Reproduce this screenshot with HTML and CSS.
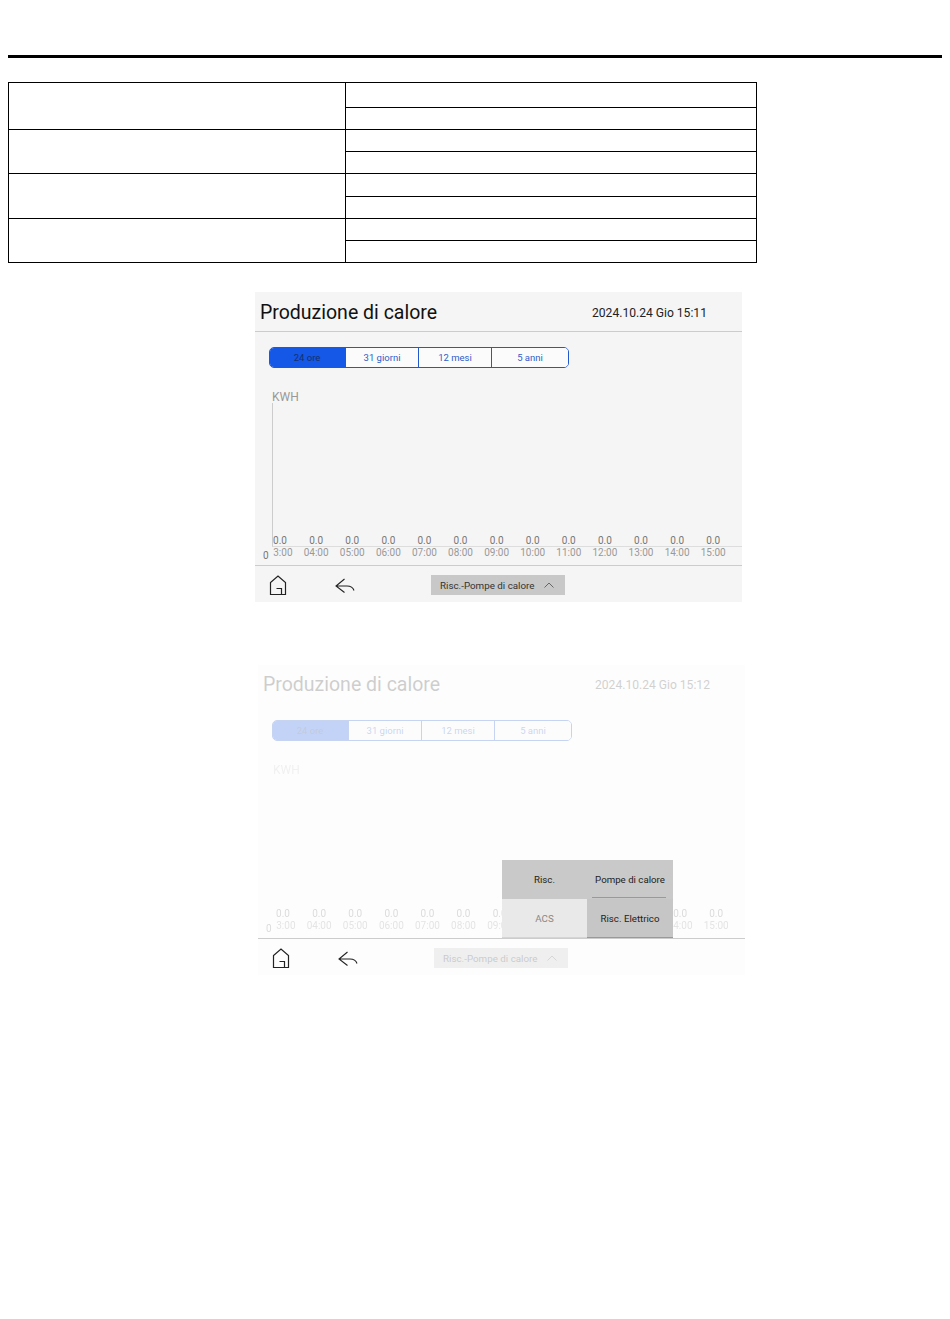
FILE: index.html
```html
<!DOCTYPE html>
<html lang="it">
<head>
<meta charset="utf-8">
<title>Produzione di calore</title>
<link rel="stylesheet" href="styles.css">
</head>
<body>
<hr class="rule">
<table class="spec">
  <tr class="r25"><td class="c1" rowspan="2"></td><td></td></tr>
  <tr class="r22"><td></td></tr>
  <tr class="r22"><td class="c1" rowspan="2"></td><td></td></tr>
  <tr class="r22"><td></td></tr>
  <tr class="r23"><td class="c1" rowspan="2"></td><td></td></tr>
  <tr class="r22"><td></td></tr>
  <tr class="r22"><td class="c1" rowspan="2"></td><td></td></tr>
  <tr class="r22"><td></td></tr>
</table>

<section class="screen screen--first">
  <header class="head">
    <h1 class="title">Produzione di calore</h1>
    <span class="date">2024.10.24 Gio 15:11</span>
  </header>
  <div class="body">
    <div class="tabs">
      <span class="tab tab--on t1">24 ore</span><span class="tab t2">31 giorni</span><span class="tab t2">12 mesi</span><span class="tab t3">5 anni</span>
    </div>
    <div class="unit">KWH</div>
    <div class="plot">
      <div class="ticks vals"><span>0.0</span><span>0.0</span><span>0.0</span><span>0.0</span><span>0.0</span><span>0.0</span><span>0.0</span><span>0.0</span><span>0.0</span><span>0.0</span><span>0.0</span><span>0.0</span><span>0.0</span></div>
    </div>
    <div class="axis">
      <span class="zero">0</span>
      <div class="ticks times"><span>03:00</span><span>04:00</span><span>05:00</span><span>06:00</span><span>07:00</span><span>08:00</span><span>09:00</span><span>10:00</span><span>11:00</span><span>12:00</span><span>13:00</span><span>14:00</span><span>15:00</span></div>
    </div>
  </div>
  <footer class="foot">
    <svg class="home" viewBox="0 0 18 21" width="18" height="21"><path d="M1.500 19.500V7.500L9 1l7.500 6.500v12z M7.500 13.500h5v6" fill="none" stroke="#222" stroke-width="1.2"/></svg>
    <svg class="back" viewBox="0 0 20 16" width="20" height="16"><path d="M9.500 1L1 8l8.500 6.500M1 8h11c4 0 6 1.500 7 4.500" fill="none" stroke="#222" stroke-width="1.1"/></svg>
    <div class="drop"><span>Risc.-Pompe di calore</span><svg class="chev" viewBox="0 0 10 6" width="10" height="6"><path d="M.5 5.500L5 1l4.500 4.500" fill="none" stroke="#666" stroke-width="1"/></svg></div>
  </footer>
</section>

<section class="screen screen--dim">
  <header class="head dim">
    <h1 class="title">Produzione di calore</h1>
    <span class="date">2024.10.24 Gio 15:12</span>
  </header>
  <div class="body">
    <div class="dim">
      <div class="tabs">
        <span class="tab tab--on t1">24 ore</span><span class="tab t2">31 giorni</span><span class="tab t2">12 mesi</span><span class="tab t3">5 anni</span>
      </div>
      <div class="unit">KWH</div>
      <div class="plot">
        <div class="ticks vals"><span>0.0</span><span>0.0</span><span>0.0</span><span>0.0</span><span>0.0</span><span>0.0</span><span>0.0</span><span>0.0</span><span>0.0</span><span>0.0</span><span>0.0</span><span>0.0</span><span>0.0</span></div>
      </div>
      <div class="axis">
        <span class="zero">0</span>
        <div class="ticks times"><span>03:00</span><span>04:00</span><span>05:00</span><span>06:00</span><span>07:00</span><span>08:00</span><span>09:00</span><span>10:00</span><span>11:00</span><span>12:00</span><span>13:00</span><span>14:00</span><span>15:00</span></div>
      </div>
    </div>
  </div>
  <footer class="foot">
    <svg class="home" viewBox="0 0 18 21" width="18" height="21"><path d="M1.500 19.500V7.500L9 1l7.500 6.500v12z M7.500 13.500h5v6" fill="none" stroke="#222" stroke-width="1.2"/></svg>
    <svg class="back" viewBox="0 0 20 16" width="20" height="16"><path d="M9.500 1L1 8l8.500 6.500M1 8h11c4 0 6 1.500 7 4.500" fill="none" stroke="#222" stroke-width="1.1"/></svg>
    <div class="drop dim"><span>Risc.-Pompe di calore</span><svg class="chev" viewBox="0 0 10 6" width="10" height="6"><path d="M.5 5.500L5 1l4.500 4.500" fill="none" stroke="#666" stroke-width="1"/></svg></div>
  </footer>
  <div class="menu">
    <span class="item">Risc.</span>
    <span class="item item--line">Pompe di calore</span>
    <span class="item item--off">ACS</span>
    <span class="item item--sel">Risc. Elettrico</span>
  </div>
</section>
</body>
</html>
```
FILE: styles.css
```css
html, body { margin: 0; padding: 0; background: #fff; }
body { padding: 55px 8px 0; font-family: Roboto, "Liberation Sans", sans-serif; color: #222; min-height: 1264px; box-sizing: content-box; }

.rule { height: 3px; margin: 0; border: 0; background: #000; }

.spec { width: 749px; margin-top: 24px; border-collapse: collapse; table-layout: fixed; }
.spec td { border: 1px solid #000; padding: 0; }
.spec .c1 { width: 336px; }
.r25 { height: 25px; }
.r22 { height: 22px; }
.r23 { height: 23px; }

.screen { position: relative; width: 487px; height: 310px; background: #f5f5f5; display: flex; flex-direction: column; }
.screen--first { margin: 29px 0 0 247px; }
.screen--dim { margin: 63px 0 0 250px; background: #fdfdfd; }
.dim { opacity: .25; }

.head { height: 40px; box-sizing: border-box; flex: none; display: flex; align-items: center; border-bottom: 1px solid #ccc; padding: 2px 0 0 5px; }
.screen--dim .head { padding-top: 0; opacity: .2; border-bottom-color: transparent; }
.title { margin: 0; font-size: 19.5px; font-weight: 400; color: #111; width: 332px; }
.date { font-size: 12.1px; color: #222; }

.body { flex: 1; padding-top: 15px; min-height: 0; }

.tabs { display: flex; width: 300px; height: 21px; margin-left: 14px; box-sizing: border-box; border: 1px solid #2358cc; border-radius: 5px; overflow: hidden; }
.tab { box-sizing: border-box; display: flex; align-items: center; justify-content: center; font-size: 9.5px; color: #2d5ec9; background: #fbfbfb; border-left: 1px solid #2358cc; }
.t1 { width: 75px; border-left: 0; padding-right: 1px; }
.t2 { width: 73px; }
.t3 { width: 77px; }
.tab--on { background: #1557e6; color: #13306f; }

.unit { margin: 23px 0 0 17px; height: 12px; font-size: 12px; line-height: 13px; color: #999; }
.screen--dim .unit { margin-left: 15px; color: #ccc; }

.plot { margin-left: 17px; height: 144px; box-sizing: border-box; border-left: 1px solid #ccc; border-bottom: 1px solid #ddd; display: flex; align-items: flex-end; }
.screen--dim .plot { border-color: transparent; }
.ticks { display: flex; width: 470px; }
.ticks span { flex: none; width: 36.1px; text-align: center; font-size: 10px; line-height: 12px; }
.vals { margin-left: -11px; color: #777; }
.vals span { line-height: 10px; }

.axis { display: grid; height: 18px; }
.zero { grid-area: 1 / 1; margin: 3px 0 0 8px; font-size: 10px; line-height: 12px; color: #777; }
.times { grid-area: 1 / 1; margin-left: 7px; color: #999; clip-path: inset(0 0 0 11px); }

.foot { flex: none; height: 37px; box-sizing: border-box; border-top: 1px solid #ccc; display: flex; align-items: flex-start; }
.home { margin: 9px 0 0 14px; }
.back { margin: 12px 0 0 48px; }
.drop { margin: 9px 0 0 76px; width: 134px; height: 20px; background: #c8c8c8; display: flex; align-items: center; padding-left: 9px; box-sizing: border-box; font-size: 9.8px; color: #333; }
.chev { margin-left: 9px; }

.menu { position: absolute; left: 244px; top: 195px; width: 171px; height: 78px; display: grid; grid-template-columns: 85px 86px; grid-template-rows: 39px 39px; font-size: 9.7px; color: #222; }
.item { display: flex; align-items: center; justify-content: center; background: #c9c9c9; }
.item--line { position: relative; }
.item--line::after { content: ""; position: absolute; left: 5px; right: 7px; bottom: 1px; height: 1px; background: #999; }
.item--off { background: #e9e9e9; color: #888; box-shadow: inset 0 -1px 0 #d5d5d5; }
.item--sel { background: #c6c6c6; box-shadow: inset 0 -1px 0 #999; }
```
